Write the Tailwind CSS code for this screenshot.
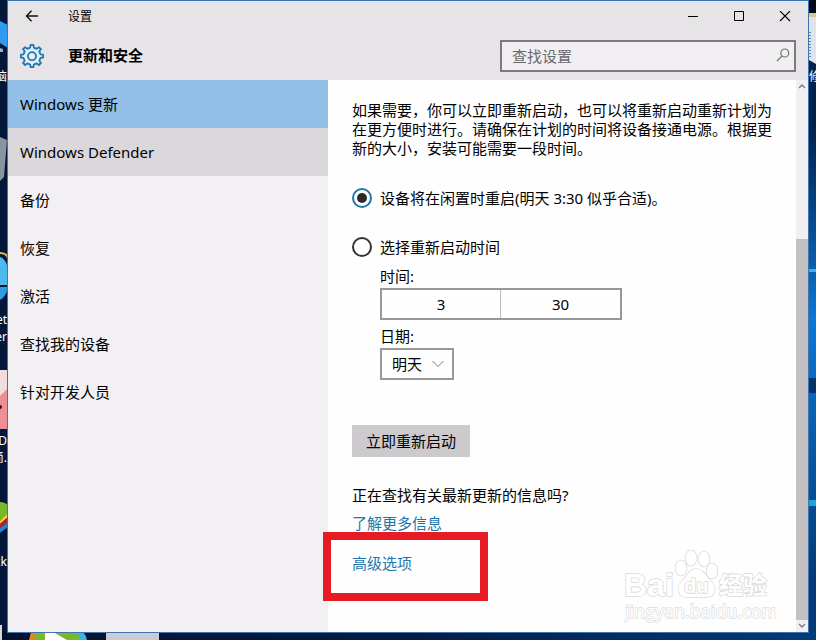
<!DOCTYPE html>
<html lang="zh-CN">
  <head>
    <meta charset="UTF-8" />
    <meta name="viewport" content="width=device-width, initial-scale=1.0" />
    <script src="https://cdn.jsdelivr.net/npm/@tailwindcss/browser@4"></script>
    <title>设置</title>
  </head>

  <body
    class="relative flex h-screen overflow-hidden bg-[#03173a] px-[7px] pb-[7px] font-['Noto_Sans','Noto_Sans_CJK_SC',sans-serif] text-[15px] text-black"
  >
    <!-- desktop behind the window -->
    <div class="absolute inset-x-0 bottom-0 h-2 bg-linear-to-r from-[#03112f] via-[#041c45] to-[#053c78]"></div>
    <div
      class="absolute inset-y-0 right-0 w-2 bg-linear-to-b from-[#04224f] from-20% via-[#0a78d8] via-50% to-[#053c78] to-90%"
    ></div>
    <svg class="absolute left-0 top-0 h-[640px] w-2" viewBox="0 0 8 640" aria-hidden="true">
      <path d="M0 21l8 4v23l-8-5z" fill="#2d9cee" />
      <path d="M0 48l3 1v3H0z" fill="#9fb0c2" />
      <path d="M0 137l7 3-3 37-4 4z" fill="#8a949e" />
      <path d="M0 253c4 0 7 2 8 5" stroke="#d9b54a" stroke-width="2" fill="none" />
      <path d="M0 257c4 1 7 6 8 12v16H0z" fill="#4db8ec" />
      <path d="M0 287h8c-1 6-4 11-8 13z" fill="#2f9be0" />
      <path d="M0 370h8v59H0z" fill="#ee8f93" />
      <path d="M0 370h8v18l-8 8z" fill="#f3dcdc" />
      <circle cx="0" cy="407" r="2" fill="#3a1114" />
      <path d="M0 502c4 0 7 2 8 3v9l-8 7z" fill="#76b82a" />
      <path d="M0 521l8-8v4l-8 7z" fill="#ffd21f" />
      <path d="M0 524l8-7v5l-8 6z" fill="#b51f3a" />
      <path d="M0 528l8-6v5l-8 6z" fill="#2e7fc4" />
      <path d="M0 625h2v15H0z" fill="#d8d8d8" />
    </svg>
    <svg class="absolute bottom-0 left-0 h-2 w-40" viewBox="0 0 160 8" aria-hidden="true">
      <path d="M31 0h9l-5 8h-6z" fill="#e8822a" />
      <path d="M36 0h40l6 8H34z" fill="#7ab829" />
      <path d="M76 0h7q3 3 4 8h-6z" fill="#3fb3de" />
      <path d="M45 0h8l14 8H45z" fill="#fff" />
      <path d="M106 0h53v8h-53z" fill="#c9ccd2" />
    </svg>
    <svg class="absolute right-0 top-0 h-[640px] w-[7px]" viewBox="0 0 7 640" aria-hidden="true">
      <path d="M0 0h7v13H0z" fill="#020a1c" />
      <path d="M0 13h7v4H0z" fill="#dcc98a" />
      <path d="M0 17h7v47l-7-4z" fill="#dfe4ea" />
      <path d="M1 32v26" stroke="#4f8fc9" stroke-width="2" stroke-dasharray="1 2" />
      <path d="M0 269h7v3H0z" fill="#34b4e8" />
      <path d="M0 378h7v15H0z" fill="#04346e" />
      <path d="M0 500h7v6H0z" fill="#1ba3dc" />
    </svg>
    <div class="absolute left-0 top-0 h-full w-[7px] overflow-hidden text-xs leading-4 text-white" aria-hidden="true">
      <span class="absolute right-0 top-[69px]">脑</span>
      <span class="absolute right-0 top-[312px]">et</span>
      <span class="absolute right-0 top-[329px]">er</span>
      <span class="absolute right-0 top-[433px]">D</span>
      <span class="absolute right-0 top-[450px] whitespace-nowrap">简.</span>
      <span class="absolute right-0 top-[554px]">ck</span>
    </div>
    <div class="absolute right-0 top-0 h-full w-[7px] overflow-hidden text-xs leading-4 text-white" aria-hidden="true">
      <span class="absolute left-0 top-[69px]">修</span>
    </div>

    <!-- settings window -->
    <div class="relative flex min-w-0 flex-1 flex-col border border-[#3f74ad] bg-[#fefefe]">
      <header class="border-t-2 border-[#dbe6f3] bg-[#e6e4e7]">
        <div class="flex h-7 items-center">
          <button class="flex w-12 justify-center" aria-label="返回">
            <svg class="h-3.5 w-3.5" viewBox="0 0 14 14" fill="none" stroke="#111" stroke-width="1.4">
              <path d="M1.5 6H13M6.5 .8L1.5 6l5 5.2" />
            </svg>
          </button>
          <span class="ml-3 flex-1 text-xs">设置</span>
          <button class="flex w-[46px] justify-center" aria-label="最小化">
            <svg class="h-3 w-3" viewBox="0 0 12 12" stroke="#000"><path d="M1 5.5h10" /></svg>
          </button>
          <button class="flex w-[46px] justify-center" aria-label="最大化">
            <svg class="h-3 w-3" viewBox="0 0 12 12" stroke="#000" fill="none"><path d="M1.5 .5h9v9h-9z" /></svg>
          </button>
          <button class="flex w-[46px] justify-center" aria-label="关闭">
            <svg class="h-3 w-3" viewBox="0 0 12 12" stroke="#000" stroke-width="1.1"><path d="M1 0l10 10M11 0L1 10" /></svg>
          </button>
        </div>
        <div class="flex h-[49px] items-center pr-3">
          <div class="flex w-12 justify-center">
            <svg class="h-6 w-6" viewBox="0 0 24 24" fill="#e2f0f8" stroke="#2376b0" stroke-width="1.8" stroke-linejoin="round">
              <path
                d="M10.2 3.6L10.6 0.9h2.8l.4 2.7 2.9 1.2 2.2-1.6 2 2-1.6 2.2 1.2 2.9 2.6.4v2.8l-2.6.4-1.2 2.9 1.6 2.2-2 2-2.2-1.6-2.9 1.2-.4 2.6h-2.8l-.4-2.6-2.9-1.2-2.2 1.6-2-2 1.6-2.2-1.2-2.9-2.6-.4v-2.8l2.6-.4 1.2-2.9-1.6-2.2 2-2 2.2 1.6z"
              />
              <circle cx="12" cy="12.2" r="4" />
            </svg>
          </div>
          <h1 class="ml-3 flex-1 font-bold">更新和安全</h1>
          <div class="relative w-[296px]">
            <input
              class="block h-8 w-full border-2 border-[#7b797c] bg-[#f1eff2] pl-[10px] pr-8 placeholder:text-[#6a686b]"
              type="text"
              aria-label="查找设置"
              placeholder="查找设置"
            />
            <svg class="absolute right-1.5 top-2 h-3.5 w-3.5" viewBox="0 0 14 14" fill="none" stroke="#777" stroke-width="1.2">
              <circle cx="8.8" cy="5" r="4" />
              <path d="M6 8L1 13" />
            </svg>
          </div>
        </div>
      </header>

      <div class="flex min-h-0 flex-1">
        <nav class="w-80 shrink-0 bg-[#f2f0f3]">
          <a href="#" class="flex h-12 items-center bg-[#92c0e8] px-3">Windows 更新</a>
          <a href="#" class="flex h-12 items-center bg-[#dad8db] px-3">Windows Defender</a>
          <a href="#" class="flex h-12 items-center px-3">备份</a>
          <a href="#" class="flex h-12 items-center px-3">恢复</a>
          <a href="#" class="flex h-12 items-center px-3">激活</a>
          <a href="#" class="flex h-12 items-center px-3">查找我的设备</a>
          <a href="#" class="flex h-12 items-center px-3">针对开发人员</a>
        </nav>

        <main class="min-w-0 flex-1 px-6 pt-[21px]">
          <p class="leading-[19px]">
            如果需要，你可以立即重新启动，也可以将重新启动重新计划为在更方便时进行。请确保在计划的时间将设备接通电源。根据更新的大小，安装可能需要一段时间。
          </p>

          <div class="mt-[30px] flex h-5 items-center gap-2">
            <input
              class="grid h-5 w-5 shrink-0 appearance-none place-content-center rounded-full border-2 border-[#333] checked:border-[#2376a8] checked:before:h-2.5 checked:before:w-2.5 checked:before:rounded-full checked:before:bg-[#2b2b2b] checked:before:content-['']"
              type="radio"
              name="restart"
              id="auto"
              checked
            />
            <label for="auto">设备将在闲置时重启(明天 3:30 似乎合适)。</label>
          </div>
          <div class="mt-[29px] flex h-5 items-center gap-2">
            <input
              class="grid h-5 w-5 shrink-0 appearance-none place-content-center rounded-full border-2 border-[#333] checked:border-[#2376a8] checked:before:h-2.5 checked:before:w-2.5 checked:before:rounded-full checked:before:bg-[#2b2b2b] checked:before:content-['']"
              type="radio"
              name="restart"
              id="pick"
            />
            <label for="pick">选择重新启动时间</label>
          </div>

          <div class="mt-[7px] pl-7 leading-6">
            <label class="block" for="hour">时间:</label>
            <div class="flex h-8 w-[242px] border-2 border-[#99979a]">
              <input class="w-1/2 border-r border-[#bbb] text-center" type="text" id="hour" value="3" />
              <input class="w-1/2 text-center" type="text" aria-label="分钟" value="30" />
            </div>
            <label class="mt-1 block" for="date">日期:</label>
            <div class="relative w-[74px]">
              <select class="block h-8 w-full appearance-none border-2 border-[#99979a] pl-[10px]" id="date">
                <option>明天</option>
              </select>
              <svg class="pointer-events-none absolute right-2.5 top-3 h-2 w-3" viewBox="0 0 12 8" fill="none" stroke="#777">
                <path d="M.5 1L6 6.5 11.5 1" />
              </svg>
            </div>
          </div>

          <button class="mt-[45px] block h-8 w-[118px] bg-[#cccacd]">立即重新启动</button>

          <p class="mt-[26px] leading-6">正在查找有关最新更新的信息吗?</p>
          <a href="#" class="mt-1 block w-fit leading-6 text-[#1c76a8]">了解更多信息</a>
          <div class="relative mt-4 w-fit leading-6">
            <a href="#" class="block text-[#1c76a8]">高级选项</a>
            <div class="pointer-events-none absolute -left-[29px] -top-[19px] h-[69px] w-[165px] border-8 border-[#e61b23]"></div>
          </div>
        </main>

        <!-- scrollbar -->
        <div class="flex w-3 shrink-0 flex-col bg-[#f1eff2]" aria-hidden="true">
          <svg class="h-3 w-3" viewBox="0 0 12 12" fill="none" stroke="#777" stroke-width="1.3"><path d="M3 8l3-3 3 3" /></svg>
          <div class="h-[147px]"></div>
          <div class="flex-1 bg-[#c2c0c3]"></div>
          <svg class="h-3 w-3" viewBox="0 0 12 12" fill="none" stroke="#777" stroke-width="1.3"><path d="M3 4l3 3 3-3" /></svg>
        </div>
      </div>

      <!-- watermark -->
      <svg
        class="pointer-events-none absolute bottom-1.5 right-8 h-[76px] w-[152px] font-['Liberation_Sans','Noto_Sans_CJK_SC',sans-serif]"
        viewBox="0 0 152 76"
        fill="#fff"
        stroke="#dadada"
        stroke-width="1.6"
        paint-order="stroke"
        aria-hidden="true"
      >
        <text x="0" y="46" font-size="32" font-weight="bold">Bai</text>
        <ellipse cx="57" cy="18" rx="5.5" ry="7.5" />
        <ellipse cx="67" cy="8" rx="5.5" ry="7.5" />
        <ellipse cx="80" cy="9" rx="5.5" ry="7.5" />
        <ellipse cx="88" cy="21" rx="5.5" ry="7.5" />
        <path d="M72 19c6 0 9 5 13 10 5 5 7 9 5 14-2 4-6 4-10 4H64c-5 0-8-1-9-5-2-5 1-9 5-13 4-5 6-10 12-10z" />
        <text x="60" y="43" font-size="20" font-weight="bold">du</text>
        <text x="95" y="44" font-size="24" font-weight="bold">经验</text>
        <text x="1" y="68" font-size="18" stroke-width="1.3" class="font-['Open_Sans',sans-serif]">jingyan.baidu.com</text>
      </svg>
    </div>
  </body>
</html>
